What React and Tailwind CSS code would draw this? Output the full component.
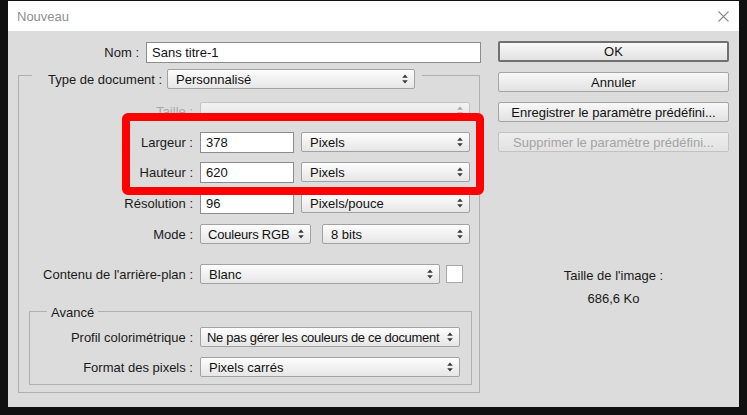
import React from "react";

const font = { fontFamily: '"Liberation Sans", Arial, sans-serif' };

function Arrows({ color = "#3a3a3a" }) {
  return (
    <svg width="6" height="10" viewBox="0 0 6 10" className="shrink-0">
      <path d="M3 0.5 L5.8 3.8 L0.2 3.8 Z" fill={color} />
      <path d="M3 9.5 L5.8 6.2 L0.2 6.2 Z" fill={color} />
    </svg>
  );
}

function Select({ w, value, disabled, h = "h-[20px]", pl = "pl-[8px]", textCls = "" }) {
  return (
    <div
      className={`${w} ${h} shrink-0 flex items-center justify-between rounded-[2px] border ${pl} pr-[6px] ${
        disabled
          ? "border-[#c4c4c4] bg-gradient-to-b from-[#f2f2f2] to-[#e4e4e4] text-[#a0a0a0]"
          : "border-[#a2a2a2] bg-gradient-to-b from-[#fdfdfd] to-[#e6e6e6] text-[#111]"
      }`}
    >
      <span className={`whitespace-nowrap leading-none ${textCls}`}>{value}</span>
      <Arrows color={disabled ? "#a8a8a8" : "#3a3a3a"} />
    </div>
  );
}

function Input({ w, value }) {
  return (
    <div className={`${w} h-[21px] shrink-0 flex items-center border border-[#8c8c8c] bg-white pl-[5px] text-[#111]`}>
      <span className="leading-none">{value}</span>
    </div>
  );
}

function Button({ children, disabled, primary, h = "h-[20px]" }) {
  return (
    <div
      className={`w-[231px] ${h} flex items-center justify-center rounded-[2px] ${
        primary ? "border-2 border-[#707070]" : "border border-[#a5a5a5]"
      } ${
        disabled
          ? "bg-gradient-to-b from-[#eeeeee] to-[#e2e2e2] text-[#a3a3a3] border-[#c2c2c2]"
          : "bg-gradient-to-b from-[#f8f8f8] to-[#e2e2e2] text-[#111]"
      }`}
    >
      <span className="leading-none">{children}</span>
    </div>
  );
}

function Row({ label, labelW, children, className = "", disabled }) {
  return (
    <div className={`flex items-center h-[20px] ${className}`}>
      <div className={`${labelW} shrink-0 text-right whitespace-nowrap ${disabled ? "text-[#a8a8a8]" : "text-[#1a1a1a]"}`}>{label}</div>
      <div className="ml-[7px] flex items-center">{children}</div>
    </div>
  );
}

export default function App() {
  return (
    <div className="w-[747px] h-[415px] bg-[#101010] pl-[8px] pt-[1px] overflow-hidden text-[13px] leading-[15px]" style={font}>
      <div className="w-[731px] h-[406px] flex flex-col bg-[#dcdcdc] relative">
        {/* title bar */}
        <div className="h-[30px] bg-white flex items-center justify-between pl-[9px] pr-[10px]">
          <span className="text-[13px] text-[#8f8f8f]">Nouveau</span>
          <svg width="11" height="11" viewBox="0 0 11 11">
            <path d="M0.5 0.5 L10.5 10.5 M10.5 0.5 L0.5 10.5" stroke="#8a8a8a" strokeWidth="1.1" />
          </svg>
        </div>

        <div className="flex flex-1">
          {/* left column */}
          <div className="w-[490px] shrink-0">
            <div className="mt-[11px] flex items-center h-[21px]">
              <div className="w-[131px] text-right text-[#1a1a1a]">Nom :</div>
              <div className="ml-[7px]">
                <Input w="w-[335px]" value="Sans titre-1" />
              </div>
            </div>

            {/* group box */}
            <div className="mt-[12px] ml-[10px] w-[462px] border border-[#b0b0b0] pb-[7px]">
              <div className="-mt-[7px] ml-[13px] w-fit flex items-center bg-[#dcdcdc] pl-[16px] pr-[7px] h-[20px]">
                <div className="w-[113px] text-right text-[#1a1a1a] whitespace-nowrap">Type de document :</div>
                <div className="ml-[6px]">
                  <Select w="w-[248px]" value="Personnalisé" />
                </div>
              </div>

              <Row label="Taille :" labelW="w-[174px]" className="mt-[12px]" disabled>
                <Select w="w-[270px]" h="h-[19px]" value="" disabled />
              </Row>
              <Row label="Largeur :" labelW="w-[174px]" className="mt-[11px]">
                <Input w="w-[94px]" value="378" />
                <div className="ml-[7px]"><Select w="w-[169px]" value="Pixels" /></div>
              </Row>
              <Row label="Hauteur :" labelW="w-[174px]" className="mt-[10px]">
                <Input w="w-[94px]" value="620" />
                <div className="ml-[7px]"><Select w="w-[169px]" value="Pixels" /></div>
              </Row>
              <Row label="Résolution :" labelW="w-[174px]" className="mt-[11px]">
                <Input w="w-[94px]" value="96" />
                <div className="ml-[7px]"><Select w="w-[169px]" value="Pixels/pouce" /></div>
              </Row>
              <Row label="Mode :" labelW="w-[174px]" className="mt-[11px]">
                <Select w="w-[111px]" value="Couleurs RGB" pl="pl-[7px]" textCls="tracking-[-0.2px]" />
                <div className="ml-[11px]"><Select w="w-[148px]" value="8 bits" /></div>
              </Row>
              <Row label="Contenu de l'arrière-plan :" labelW="w-[174px]" className="mt-[20px]">
                <Select w="w-[240px]" value="Blanc" />
                <div className="ml-[6px] w-[17px] h-[18px] bg-white border border-[#a8a8a8]" />
              </Row>

              {/* Avancé */}
              <div className="mt-[27px] ml-[10px] w-[443px] border border-[#b0b0b0] pb-[7px]">
                <div className="-mt-[8px] ml-[17px] w-fit bg-[#dcdcdc] px-[4px] h-[16px] flex items-center text-[#1a1a1a]">Avancé</div>
                <Row label="Profil colorimétrique :" labelW="w-[163px]" className="mt-[7px]">
                  <Select w="w-[260px]" value="Ne pas gérer les couleurs de ce document" pl="pl-[6px]" textCls="tracking-[-0.3px]" />
                </Row>
                <Row label="Format des pixels :" labelW="w-[163px]" className="mt-[10px]">
                  <Select w="w-[260px]" value="Pixels carrés" />
                </Row>
              </div>
            </div>
          </div>

          {/* right column */}
          <div className="flex flex-col">
            <div className="mt-[10px]">
              <Button primary h="h-[21px]">OK</Button>
            </div>
            <div className="mt-[10px]"><Button>Annuler</Button></div>
            <div className="mt-[10px]"><Button>Enregistrer le paramètre prédéfini...</Button></div>
            <div className="mt-[10px]"><Button disabled>Supprimer le paramètre prédéfini...</Button></div>
            <div className="mt-[116px] w-[231px] text-center text-[#1a1a1a]">Taille de l'image :</div>
            <div className="mt-[8px] w-[231px] text-center text-[#1a1a1a]">686,6 Ko</div>
          </div>
        </div>

        {/* red annotation */}
        <div className="absolute left-[114px] top-[112px] w-[362px] h-[82px] border-[8px] border-[#ff0000] rounded-[6px]" />
      </div>
    </div>
  );
}
